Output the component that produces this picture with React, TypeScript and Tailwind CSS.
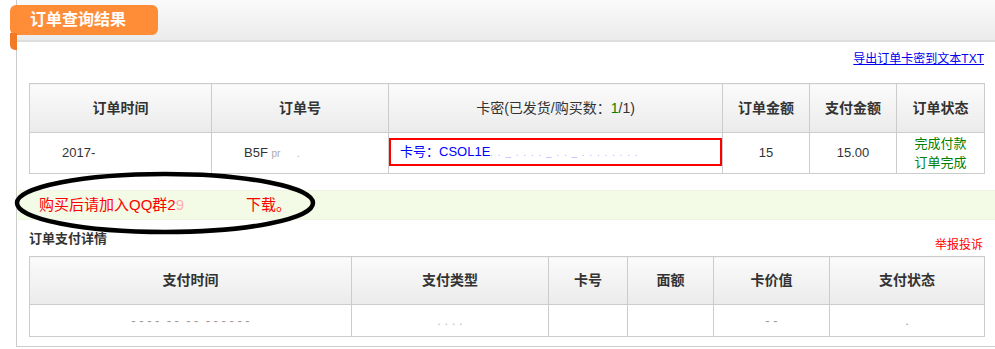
import React from "react";

const font = { fontFamily: '"Liberation Sans", "Noto Sans CJK SC", sans-serif' };

const th =
  "border border-[#cccccc] bg-gradient-to-b from-[#fbfbfb] to-[#ebebeb] text-[14px] font-bold text-[#333] text-center align-middle";
const td = "border border-[#cccccc] text-[13px] text-[#333] align-middle";

export default function App() {
  return (
    <div className="relative w-[995px] h-[349px] bg-white overflow-hidden pl-[16px]" style={font}>
      <div className="w-[979px] h-[347px] border-l border-b border-[#cccccc]">
        {/* Header bar with orange tab */}
        <div className="relative h-[42px] bg-gradient-to-b from-[#fafafa] to-[#ebebeb] border-b-2 border-[#dddddd]">
          <div className="absolute left-[-7px] top-[5px] w-[148px] h-[30px] rounded-[6px] bg-[#ff8d37] text-white text-[16px] font-bold leading-[30px] pl-[20px]">
            订单查询结果
          </div>
          <div className="absolute left-[-7px] top-[33px] w-[7px] h-[17px] rounded-bl-[5px] bg-[#f07a25]" />
        </div>

        <div className="px-[12px]">
          <div className="flex justify-end h-[41px] pt-[9px] -mr-[1px]">
            <a className="text-[12px] text-[#0000ee] underline leading-[16px]">导出订单卡密到文本TXT</a>
          </div>

          <table className="w-[955px] border-collapse table-fixed">
            <colgroup>
              <col className="w-[182px]" />
              <col className="w-[177px]" />
              <col className="w-[334px]" />
              <col className="w-[87px]" />
              <col className="w-[87px]" />
              <col className="w-[88px]" />
            </colgroup>
            <thead>
              <tr className="h-[49px]">
                <th className={th}>订单时间</th>
                <th className={th}>订单号</th>
                <th className={th + " !font-normal"}>
                  卡密(已发货/购买数：<span className="text-[#008000]">1</span>/1)
                </th>
                <th className={th}>订单金额</th>
                <th className={th}>支付金额</th>
                <th className={th}>订单状态</th>
              </tr>
            </thead>
            <tbody>
              <tr className="h-[41px]">
                <td className={td + " pl-[32px]"}>2017-</td>
                <td className={td + " pl-[32px]"}>
                  B5F <span className="text-[#aaa] text-[10px]">pr&nbsp;&nbsp;&nbsp;&nbsp;&nbsp;&nbsp;.</span>
                </td>
                <td className={td + " px-0"}>
                  <div className="h-[28px] border-2 border-[#ff0000] mt-[-3px] pl-[9px] leading-[24px] text-[13px] text-[#0000ff] whitespace-nowrap">
                    卡号：CSOL1E
                    <span className="text-[#b8b8ff] text-[10px] tracking-[1px]">. . _ . . . . _ . . _ . . . . . . . .</span>
                  </div>
                </td>
                <td className={td + " text-center"}>15</td>
                <td className={td + " text-center"}>15.00</td>
                <td className={td + " text-center text-[#008000] leading-[19px]"}>
                  完成付款
                  <br />
                  订单完成
                </td>
              </tr>
            </tbody>
          </table>

          <div className="mt-[16px] -ml-[11px] -mr-[13px] h-[30px] bg-[#f3fae5] border-y border-[#eef3e3] pl-[21px] leading-[28px] text-[15px] text-[#ff0000]">
            购买后请加入QQ群2<span className="text-[#ffb0b0]">9</span>
            <span className="inline-block w-[62px]" />
            下载。
          </div>

          <div className="flex justify-between items-end h-[36px] pb-[4px]">
            <span className="text-[13px] font-bold text-[#333] leading-[16px] mb-[5px]">订单支付详情</span>
            <span className="text-[12px] text-[#ff0000] leading-[14px]">举报投诉</span>
          </div>

          <table className="w-[955px] border-collapse table-fixed">
            <colgroup>
              <col className="w-[322px]" />
              <col className="w-[197px]" />
              <col className="w-[79px]" />
              <col className="w-[86px]" />
              <col className="w-[116px]" />
              <col className="w-[155px]" />
            </colgroup>
            <thead>
              <tr className="h-[48px]">
                <th className={th}>支付时间</th>
                <th className={th}>支付类型</th>
                <th className={th}>卡号</th>
                <th className={th}>面额</th>
                <th className={th}>卡价值</th>
                <th className={th}>支付状态</th>
              </tr>
            </thead>
            <tbody>
              <tr className="h-[32px]">
                <td className={td + " text-center text-[#999] text-[9px]"}>- - - -&nbsp;&nbsp;- -&nbsp;&nbsp;- -&nbsp;&nbsp;- - - - - -</td>
                <td className={td + " text-center text-[#bbb] text-[9px]"}>. . . .</td>
                <td className={td}></td>
                <td className={td}></td>
                <td className={td + " text-center text-[#999] text-[9px]"}>- -</td>
                <td className={td + " text-center text-[#999] text-[9px]"}>.</td>
              </tr>
            </tbody>
          </table>
        </div>
      </div>

      {/* hand-drawn highlight ellipse */}
      <svg className="absolute left-[13px] top-[170px]" width="304" height="66" viewBox="0 0 304 66">
        <ellipse cx="152" cy="33" rx="148" ry="29" fill="none" stroke="#000" strokeWidth="4.5" />
      </svg>
    </div>
  );
}
